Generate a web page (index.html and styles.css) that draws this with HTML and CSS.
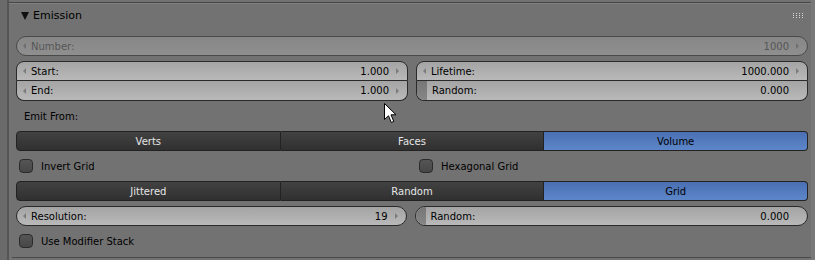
FILE: index.html
```html
<!DOCTYPE html>
<html>
<head>
<meta charset="utf-8">
<link rel="stylesheet" href="styles.css">
</head>
<body>
<div class="screen">
  <div class="leftbar"></div>
  <div class="panel">
    <div class="header">
      <span class="tri"></span>
      <span class="title">Emission</span>
      <svg class="grip" width="12" height="6" viewBox="0 0 12 6">
        <g fill="#d8d8d8">
          <rect x="0" y="0" width="1" height="1"/><rect x="3" y="0" width="1" height="1"/><rect x="6" y="0" width="1" height="1"/><rect x="9" y="0" width="1" height="1"/>
          <rect x="0" y="2" width="1" height="1"/><rect x="3" y="2" width="1" height="1"/><rect x="6" y="2" width="1" height="1"/><rect x="9" y="2" width="1" height="1"/>
          <rect x="0" y="4" width="1" height="1"/><rect x="3" y="4" width="1" height="1"/><rect x="6" y="4" width="1" height="1"/><rect x="9" y="4" width="1" height="1"/>
        </g>
      </svg>
    </div>
    <div class="content">
      <div class="row">
        <div class="num single disabled">
          <span class="arr l"></span><span class="lbl">Number:</span><span class="val">1000</span><span class="arr r"></span>
        </div>
      </div>
      <div class="row two">
        <div class="col">
          <div class="num top"><span class="arr l"></span><span class="lbl">Start:</span><span class="val">1.000</span><span class="arr r"></span></div>
          <div class="num bottom"><span class="arr l"></span><span class="lbl">End:</span><span class="val">1.000</span><span class="arr r"></span></div>
        </div>
        <div class="col">
          <div class="num top"><span class="arr l"></span><span class="lbl">Lifetime:</span><span class="val">1000.000</span><span class="arr r"></span></div>
          <div class="num bottom slider"><span class="fill"></span><span class="lbl">Random:</span><span class="val">0.000</span></div>
        </div>
      </div>
      <div class="row label">Emit From:</div>
      <div class="row radio">
        <div class="opt">Verts</div>
        <div class="opt">Faces</div>
        <div class="opt on">Volume</div>
      </div>
      <div class="row two checks">
        <div class="check"><span class="box"></span><span>Invert Grid</span></div>
        <div class="check"><span class="box"></span><span>Hexagonal Grid</span></div>
      </div>
      <div class="row radio">
        <div class="opt">Jittered</div>
        <div class="opt">Random</div>
        <div class="opt on">Grid</div>
      </div>
      <div class="row two">
        <div class="num single"><span class="arr l"></span><span class="lbl">Resolution:</span><span class="val">19</span><span class="arr r"></span></div>
        <div class="num single slider"><span class="fill"></span><span class="lbl">Random:</span><span class="val">0.000</span></div>
      </div>
      <div class="row checks">
        <div class="check"><span class="box"></span><span>Use Modifier Stack</span></div>
      </div>
    </div>
    <div class="footer"></div>
  </div>
  <div class="rightbar"></div>
</div>
<svg class="cursor" width="14" height="22" viewBox="0 0 14 22">
  <path d="M0.5 0.5 L0.5 16.5 L4.5 12.8 L7.3 19.5 L9.8 18.4 L7 11.8 L12 11.8 Z" fill="#ffffff" stroke="#000000" stroke-width="1" stroke-linejoin="miter"/>
</svg>
</body>
</html>
```

FILE: styles.css
```css
* { box-sizing: border-box; }
html, body { margin: 0; padding: 0; }
body {
  width: 815px;
  height: 260px;
  overflow: hidden;
  background: #727272;
  font-family: "DejaVu Sans", sans-serif;
  font-size: 10px;
  color: #000;
  position: relative;
}
.screen { display: flex; height: 260px; }
.leftbar {
  width: 9px;
  flex: none;
  background: #6a6a6a;
  border-right: 2px solid #555555;
}
.rightbar {
  width: 4px;
  flex: none;
  background: #787878;
}
.panel {
  width: 802px;
  flex: none;
  padding-top: 2px;
  display: flex;
  flex-direction: column;
}
.header {
  height: 29px;
  border-top: 1px solid #464646;
  box-shadow: inset 0 1px 0 #828282;
  display: flex;
  align-items: flex-start;
  padding-top: 6px;
  padding-left: 12px;
  padding-right: 6px;
  font-size: 11px;
  line-height: 14px;
}
.tri {
  width: 0; height: 0;
  border-left: 4px solid transparent;
  border-right: 4px solid transparent;
  border-top: 8px solid #101010;
  margin-right: 4px;
  margin-top: 3px;
}
.title { flex: 1; color: #000; }
.grip { margin-top: 4px; }
.content {
  padding: 5px 3px 0 7px;
  display: flex;
  flex-direction: column;
  gap: 5px;
}
.row { display: flex; width: 792px; }
.row.two { gap: 8px; }
.row.two > * { flex: 1; }
.col { display: flex; flex-direction: column; }
.num {
  height: 20px;
  display: flex;
  align-items: center;
  padding: 0 8px 0 6px;
  border: 1px solid #2a2a2a;
  background: linear-gradient(#a4a4a4, #b9b9b9);
  color: #000;
  position: relative;
}
.row > .num { flex: 1; }
.num.single { border-radius: 10px; }
.num.top { border-radius: 8px 8px 0 0; }
.num.bottom { border-radius: 0 0 8px 8px; border-top: none; height: 20px; }
.num.disabled {
  background: linear-gradient(#878787, #8f8f8f);
  border-color: #4a4a4a;
  color: #555555;
}
.lbl { flex: 1; padding-left: 5px; }
.val { padding-right: 7px; }
.arr { width: 0; height: 0; border-top: 3px solid transparent; border-bottom: 3px solid transparent; }
.arr.l { border-right: 3px solid #7c7c7c; }
.arr.r { border-left: 3px solid #7c7c7c; }
.disabled .arr.l { border-right-color: #6e6e6e; }
.disabled .arr.r { border-left-color: #6e6e6e; }
.slider { padding-left: 9px; overflow: hidden; }
.slider .fill {
  position: absolute;
  left: 0; top: 0; bottom: 0;
  width: 10px;
  background: linear-gradient(#767676, #868686);
}
.slider.single .fill { border-radius: 9px 0 0 9px; }
.slider.bottom .fill { border-radius: 0 0 0 7px; }
.slider .lbl { position: relative; padding-left: 6px; }
.slider .val { position: relative; padding-right: 10px; }
.row.label { height: 20px; align-items: center; padding-left: 8px; }
.row.radio { height: 20px; }
.opt {
  flex: 1;
  height: 20px;
  display: flex;
  align-items: center;
  justify-content: center;
  border: 1px solid #222222;
  border-left: none;
  background: linear-gradient(#424242, #303030);
  color: #e6e6e6;
}
.opt:first-child { border-left: 1px solid #222222; border-radius: 4px 0 0 4px; }
.opt:last-child { border-radius: 0 4px 4px 0; }
.opt.on {
  background: linear-gradient(#4a6fb2, #5d87ca);
  color: #000;
}
.row.checks { height: 20px; }
.check { display: flex; align-items: center; padding-left: 3px; }
.box {
  width: 14px; height: 14px;
  border: 1px solid #2b2b2b;
  border-radius: 4px;
  background: linear-gradient(#555555, #474747);
  margin-right: 8px;
}
.footer {
  margin-top: 6px;
  height: 1px;
  background: #4a4a4a;
  margin-left: 3px;
}
.cursor { position: absolute; left: 384px; top: 103px; }
```
